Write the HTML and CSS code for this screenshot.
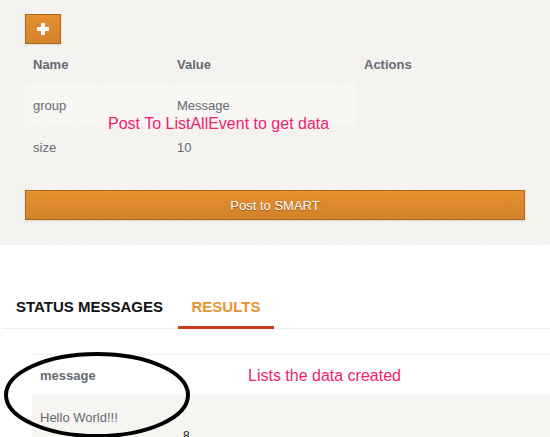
FILE: index.html
```html
<!DOCTYPE html>
<html>
<head>
<meta charset="utf-8">
<link rel="stylesheet" href="styles.css">
</head>
<body>
<div class="top">
  <button class="add"><svg width="12" height="12" viewBox="0 0 12 12"><path d="M4 0h4v4h4v4H8v4H4V8H0V4h4z" fill="#fff"/></svg></button>
  <table class="params">
    <thead>
      <tr><th class="c1">Name</th><th class="c2">Value</th><th class="c3">Actions</th></tr>
    </thead>
    <tbody>
      <tr class="odd"><td class="c1">group</td><td class="c2">Message</td><td class="c3 empty"></td></tr>
      <tr><td class="c1">size</td><td class="c2">10</td><td class="c3 empty"></td></tr>
    </tbody>
  </table>
  <button class="post">Post to SMART</button>
  <div class="note note1">Post To ListAllEvent to get data</div>
</div>
<div class="bottom">
  <div class="tabs">
    <div class="tab">STATUS MESSAGES</div>
    <div class="tab active">RESULTS</div>
  </div>
  <table class="results">
    <thead><tr><th>message</th></tr></thead>
    <tbody><tr class="odd"><td>Hello World!!!<span class="mark">8</span></td></tr></tbody>
  </table>
  <div class="note note2">Lists the data created</div>
  <svg class="ellipse" width="200" height="100" viewBox="0 0 200 100"><ellipse cx="95" cy="43" rx="91" ry="41" fill="none" stroke="#000" stroke-width="4"/></svg>
</div>
</body>
</html>
```
FILE: styles.css
```css
html, body { margin: 0; padding: 0; }
body {
  width: 550px;
  height: 437px;
  overflow: hidden;
  font-family: "Liberation Sans", Arial, sans-serif;
  background: #fff;
  position: relative;
}
.top {
  height: 245px;
  box-sizing: border-box;
  padding: 14px 25px 0 25px;
  background-color: #f3f1ed;
  background-image: repeating-linear-gradient(135deg, rgba(255,255,255,0.4) 0 1px, rgba(0,0,0,0) 1px 3px);
  position: relative;
}
.add {
  display: flex;
  align-items: center;
  justify-content: center;
  width: 36px;
  height: 30px;
  margin: 0;
  padding: 0;
  border: 1px solid #b2671f;
  background: linear-gradient(#e68f2d, #d3822a);
  box-shadow: 0 1px 2px rgba(0,0,0,0.1);
}
.params {
  border-collapse: collapse;
  width: 500px;
  margin-top: 0;
  font-size: 13px;
  color: #666a73;
}
.params th {
  text-align: left;
  font-weight: bold;
  height: 40px;
  padding: 0 8px;
  vertical-align: middle;
  font-size: 13px;
  color: #666a73;
}
.params td {
  height: 42px;
  padding: 0 8px;
  vertical-align: middle;
}
.params .c1 { width: 128px; }
.params .c2 { width: 171px; }
.params tr.odd td { background: #f7f6f3; }
.params tr.odd td.empty { background: transparent; }
.post {
  display: block;
  width: 500px;
  height: 30px;
  margin: 22px 0 0 0;
  border: 1px solid #b2671f;
  background: linear-gradient(#e68f2d, #d3822a);
  color: #fff;
  font-family: "Liberation Sans", Arial, sans-serif;
  font-size: 13px;
  text-shadow: 0 1px 1px rgba(0,0,0,0.35);
  box-shadow: 0 1px 2px rgba(0,0,0,0.12);
}
.note {
  position: absolute;
  color: #f21c70;
  font-size: 16px;
  white-space: nowrap;
}
.note1 { left: 108px; top: 115px; }
.bottom {
  position: relative;
  height: 192px;
  padding-top: 51px;
  box-sizing: border-box;
}
.tabs {
  display: flex;
  margin: 0 0 0 2px;
  border-bottom: 1px solid #eeeeee;
  height: 32px;
  box-sizing: content-box;
}
.tab {
  font-size: 15px;
  font-weight: bold;
  color: #111;
  padding: 3px 14px 0 14px;
  line-height: 16px;
}
.tab.active {
  color: #e8932f;
  border-bottom: 3px solid #c93a1b;
  margin-bottom: -2px;
  height: 33px;
  box-sizing: border-box;
  width: 96px;
  text-align: center;
  margin-left: 1px;
  padding-left: 0;
  padding-right: 0;
}
.results {
  border-collapse: collapse;
  margin: 25px 0 0 32px;
  width: 518px;
  font-size: 13px;
  color: #666a73;
  border-top: 1px solid #f0f0f0;
}
.results th {
  text-align: left;
  height: 40px;
  padding: 0 8px;
  font-weight: bold;
  color: #666a73;
  background: #fff;
}
.results td {
  height: 44px;
  padding: 0 8px;
  background: #f6f5f2;
  position: relative;
}
.mark {
  position: absolute;
  left: 151px;
  top: 34px;
  font-size: 12px;
  color: #222;
}
.note2 { left: 248px; top: 122px; }
.ellipse { position: absolute; left: 2px; top: 107px; }
```
